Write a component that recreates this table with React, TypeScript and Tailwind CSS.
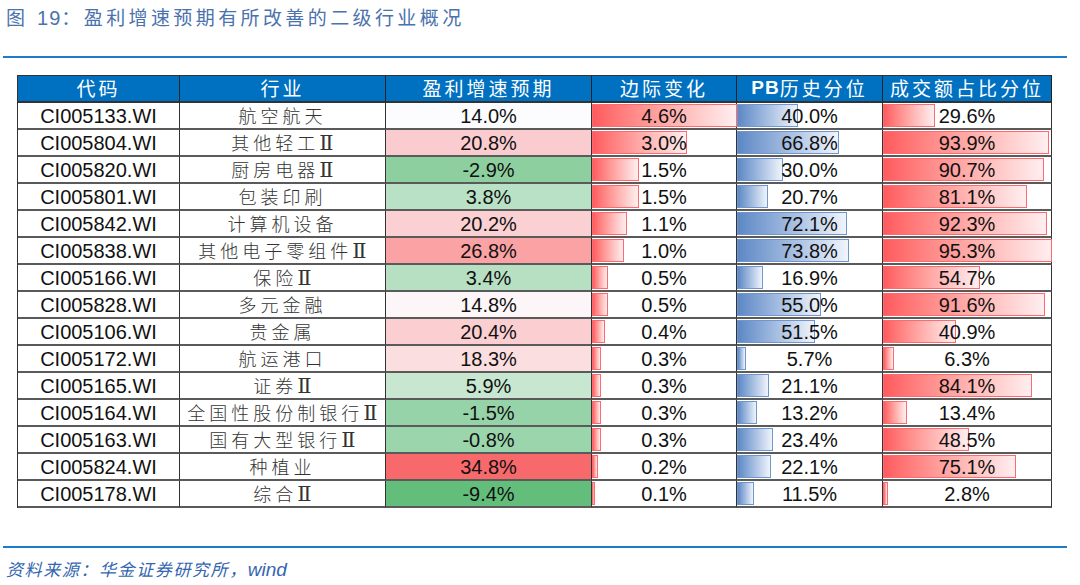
import React from "react";

type Row = {
  code: string;
  name: string;
  roman: boolean;
  growth: string;
  bg: string;
  margin: number;
  pb: number;
  turn: number;
};

const rows: Row[] = [
  { code: "CI005133.WI", name: "航空航天", roman: false, growth: "14.0%", bg: "bg-[#fcfcff]", margin: 4.6, pb: 40.0, turn: 29.6 },
  { code: "CI005804.WI", name: "其他轻工", roman: true, growth: "20.8%", bg: "bg-[#fbcccf]", margin: 3.0, pb: 66.8, turn: 93.9 },
  { code: "CI005820.WI", name: "厨房电器", roman: true, growth: "-2.9%", bg: "bg-[#8ecfa0]", margin: 1.5, pb: 30.0, turn: 90.7 },
  { code: "CI005801.WI", name: "包装印刷", roman: false, growth: "3.8%", bg: "bg-[#b9e1c5]", margin: 1.5, pb: 20.7, turn: 81.1 },
  { code: "CI005842.WI", name: "计算机设备", roman: false, growth: "20.2%", bg: "bg-[#fbd0d3]", margin: 1.1, pb: 72.1, turn: 92.3 },
  { code: "CI005838.WI", name: "其他电子零组件", roman: true, growth: "26.8%", bg: "bg-[#faa2a4]", margin: 1.0, pb: 73.8, turn: 95.3 },
  { code: "CI005166.WI", name: "保险", roman: true, growth: "3.4%", bg: "bg-[#b7e0c3]", margin: 0.5, pb: 16.9, turn: 54.7 },
  { code: "CI005828.WI", name: "多元金融", roman: false, growth: "14.8%", bg: "bg-[#fcf6f9]", margin: 0.5, pb: 55.0, turn: 91.6 },
  { code: "CI005106.WI", name: "贵金属", roman: false, growth: "20.4%", bg: "bg-[#fbcfd2]", margin: 0.4, pb: 51.5, turn: 40.9 },
  { code: "CI005172.WI", name: "航运港口", roman: false, growth: "18.3%", bg: "bg-[#fbdee0]", margin: 0.3, pb: 5.7, turn: 6.3 },
  { code: "CI005165.WI", name: "证券", roman: true, growth: "5.9%", bg: "bg-[#c7e7d1]", margin: 0.3, pb: 21.1, turn: 84.1 },
  { code: "CI005164.WI", name: "全国性股份制银行", roman: true, growth: "-1.5%", bg: "bg-[#97d3a8]", margin: 0.3, pb: 13.2, turn: 13.4 },
  { code: "CI005163.WI", name: "国有大型银行", roman: true, growth: "-0.8%", bg: "bg-[#9bd5ac]", margin: 0.3, pb: 23.4, turn: 48.5 },
  { code: "CI005824.WI", name: "种植业", roman: false, growth: "34.8%", bg: "bg-[#f8696b]", margin: 0.2, pb: 22.1, turn: 75.1 },
  { code: "CI005178.WI", name: "综合", roman: true, growth: "-9.4%", bg: "bg-[#63be7b]", margin: 0.1, pb: 11.5, turn: 2.8 },
];

const num = "font-['Liberation_Sans','Arial',sans-serif] text-[20px] text-[#111]";
const cell = "h-[27px] border-r border-b-2 border-r-[#333] border-b-[#5a5a5a] flex items-center justify-center";

function BarCell({ width, color, label }: { width: number; color: "red" | "blue"; label: string }) {
  return (
    <div className={cell + " relative"}>
      <div
        className={
          color === "red"
            ? "absolute left-0 top-[1px] bottom-[1px] border border-[#ff6a6e] bg-linear-to-r from-[#ff5a5f] to-[#ffeef0]"
            : "absolute left-0 top-[1px] bottom-[1px] border border-[#6f97cd] bg-linear-to-r from-[#5d88c5] to-[#f0f4fb]"
        }
        style={{ width: `${width}px` }}
      />
      <span className={num + " relative"}>{label}</span>
    </div>
  );
}

export default function App() {
  return (
    <div className="w-[1080px] h-[585px] bg-white overflow-hidden">
      <div className="pl-[6px] h-[36px] leading-[36px] text-[19px] tracking-[3.4px] text-[#4a72ad] font-['Liberation_Sans','Noto_Sans_CJK_SC',sans-serif]">
        图 <span className="text-[20px] tracking-[1px]">19</span>：盈利增速预期有所改善的二级行业概况
      </div>
      <div className="mt-[20px] ml-[3px] w-[1064px] h-[2px] bg-[#1b7ccb]" />
      <div className="mt-[17px] ml-[17px] w-[1035px] border-l border-t border-[#333] grid grid-cols-[162px_206px_206px_145px_146px_169px]">
        {["代码", "行业", "盈利增速预期", "边际变化"].map((h) => (
          <div
            key={h}
            className="h-[27px] bg-[#0070c0] border-r border-b-2 border-r-[#222] border-b-[#333] flex items-center justify-center text-white text-[19px] tracking-[3px] font-['Noto_Sans_CJK_SC',sans-serif]"
          >
            {h}
          </div>
        ))}
        <div className="h-[27px] bg-[#0070c0] border-r border-b-2 border-r-[#222] border-b-[#333] flex items-center justify-center text-white text-[19px] tracking-[3px] font-['Noto_Sans_CJK_SC',sans-serif]">
          <span className="font-['Liberation_Sans',sans-serif] font-bold tracking-[1px]">PB</span>历史分位
        </div>
        <div className="h-[27px] bg-[#0070c0] border-r border-b-2 border-r-[#222] border-b-[#333] flex items-center justify-center text-white text-[19px] tracking-[3px] font-['Noto_Sans_CJK_SC',sans-serif]">
          成交额占比分位
        </div>
        {rows.map((r) => (
          <React.Fragment key={r.code}>
            <div className={cell}>
              <span className={num}>{r.code}</span>
            </div>
            <div className={cell}>
              <span className="text-[18px] tracking-[4px] text-[#333] font-light font-['Noto_Sans_CJK_SC',sans-serif]">
                {r.name}
                {r.roman && (
                  <span className="font-['DejaVu_Serif','Liberation_Serif',serif] text-[21px] leading-none tracking-[0px] font-normal">
                    Ⅱ
                  </span>
                )}
              </span>
            </div>
            <div className={cell + " " + r.bg}>
              <span className={num}>{r.growth}</span>
            </div>
            <BarCell width={r.margin * 31.5} color="red" label={r.margin.toFixed(1) + "%"} />
            <BarCell width={r.pb * 1.52} color="blue" label={r.pb.toFixed(1) + "%"} />
            <BarCell width={r.turn * 1.773} color="red" label={r.turn.toFixed(1) + "%"} />
          </React.Fragment>
        ))}
      </div>
      <div className="mt-[38px] ml-[3px] w-[1064px] h-[2px] bg-[#1b7ccb]" />
      <div className="mt-[11px] pl-[6px] h-[22px] leading-[22px] italic text-[17px] tracking-[1.6px] text-[#3465b0] font-['Liberation_Sans','Noto_Sans_CJK_SC',sans-serif]">
        资料来源：华金证券研究所，<span className="text-[19px] tracking-[0px]">wind</span>
      </div>
    </div>
  );
}
